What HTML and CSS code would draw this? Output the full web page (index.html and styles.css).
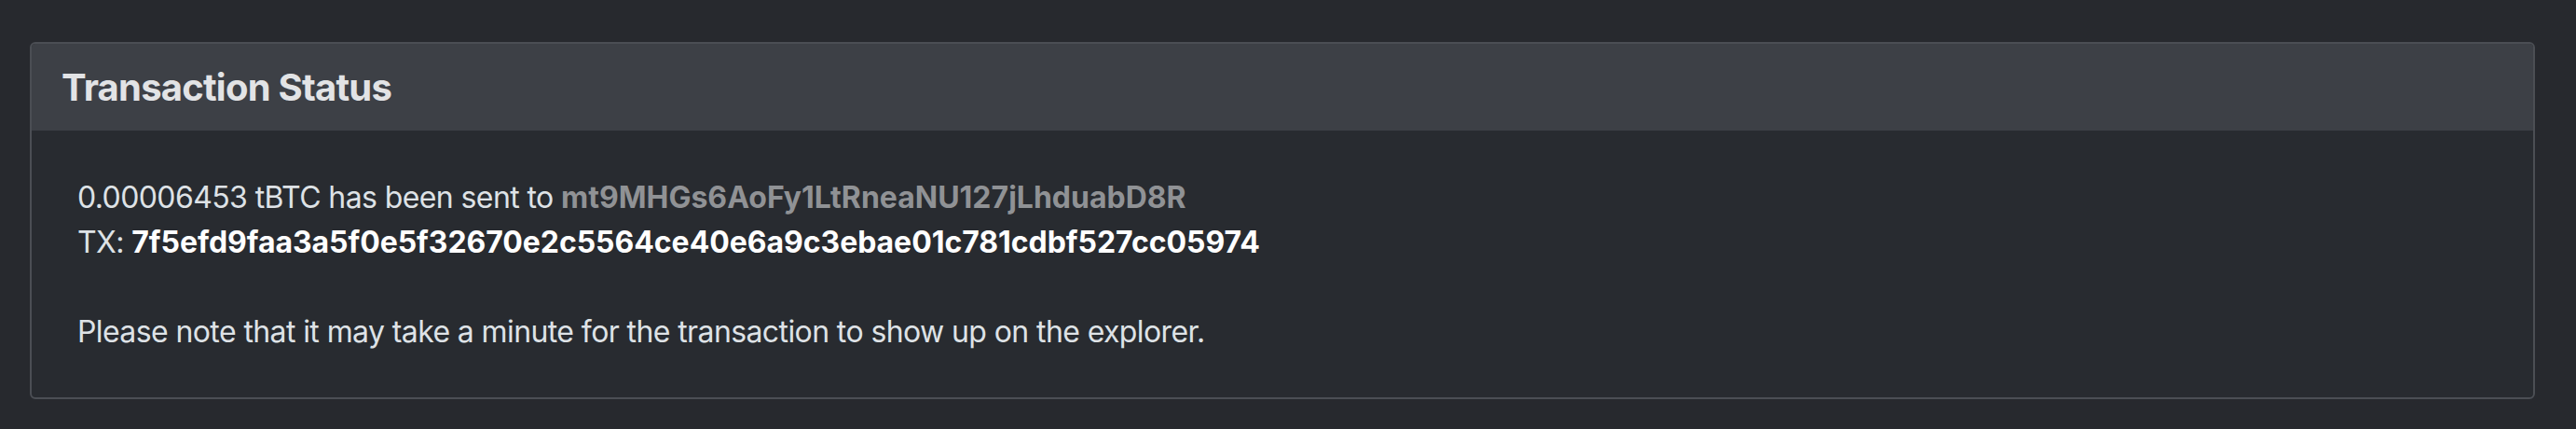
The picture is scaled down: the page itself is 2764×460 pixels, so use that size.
FILE: index.html
```html
<!DOCTYPE html>
<html lang="en">
<head>
<meta charset="utf-8">
<title>Transaction Status</title>
<link rel="stylesheet" href="styles.css">
</head>
<body>
<main class="page">
  <section class="card">
    <header class="card-header">
      <h5 class="card-title">Transaction Status</h5>
    </header>
    <div class="card-body">
      <p class="line">0.00006453 tBTC has been sent to <strong class="addr">mt9MHGs6AoFy1LtRneaNU127jLhduabD8R</strong></p>
      <p class="line">TX: <strong class="tx">7f5efd9faa3a5f0e5f32670e2c5564ce40e6a9c3ebae01c781cdbf527cc05974</strong></p>
      <p class="line blank">&nbsp;</p>
      <p class="line">Please note that it may take a minute for the transaction to show up on the explorer.</p>
    </div>
  </section>
</main>
</body>
</html>
```
FILE: styles.css
```css
html, body {
  margin: 0;
  padding: 0;
  background: #27292e;
}
body {
  font-family: Inter, "Noto Sans", "Liberation Sans", sans-serif;
  color: #dee2e6;
}
.page {
  padding: 45px 44px 32px 32px;
}
.card {
  background: #282b30;
  border: 2px solid #4b4e54;
  border-radius: 6px;
  overflow: hidden;
}
.card-header {
  background: #3d4046;
  padding: 23px 32px 22px 32px;
}
.card-title {
  margin: 0;
  font-size: 40px;
  line-height: 48px;
  font-weight: 700;
  letter-spacing: -0.78px;
  color: #e2e3e5;
}
.card-body {
  padding: 48px 49px 46px 49px;
}
.line {
  margin: 0;
  font-size: 32px;
  line-height: 48px;
  font-weight: 400;
  letter-spacing: -0.6px;
  color: #dee2e6;
}
.addr {
  font-weight: 700;
  letter-spacing: 0;
  color: #909295;
}
.tx {
  font-weight: 700;
  letter-spacing: -0.05px;
  color: #ffffff;
}
```
